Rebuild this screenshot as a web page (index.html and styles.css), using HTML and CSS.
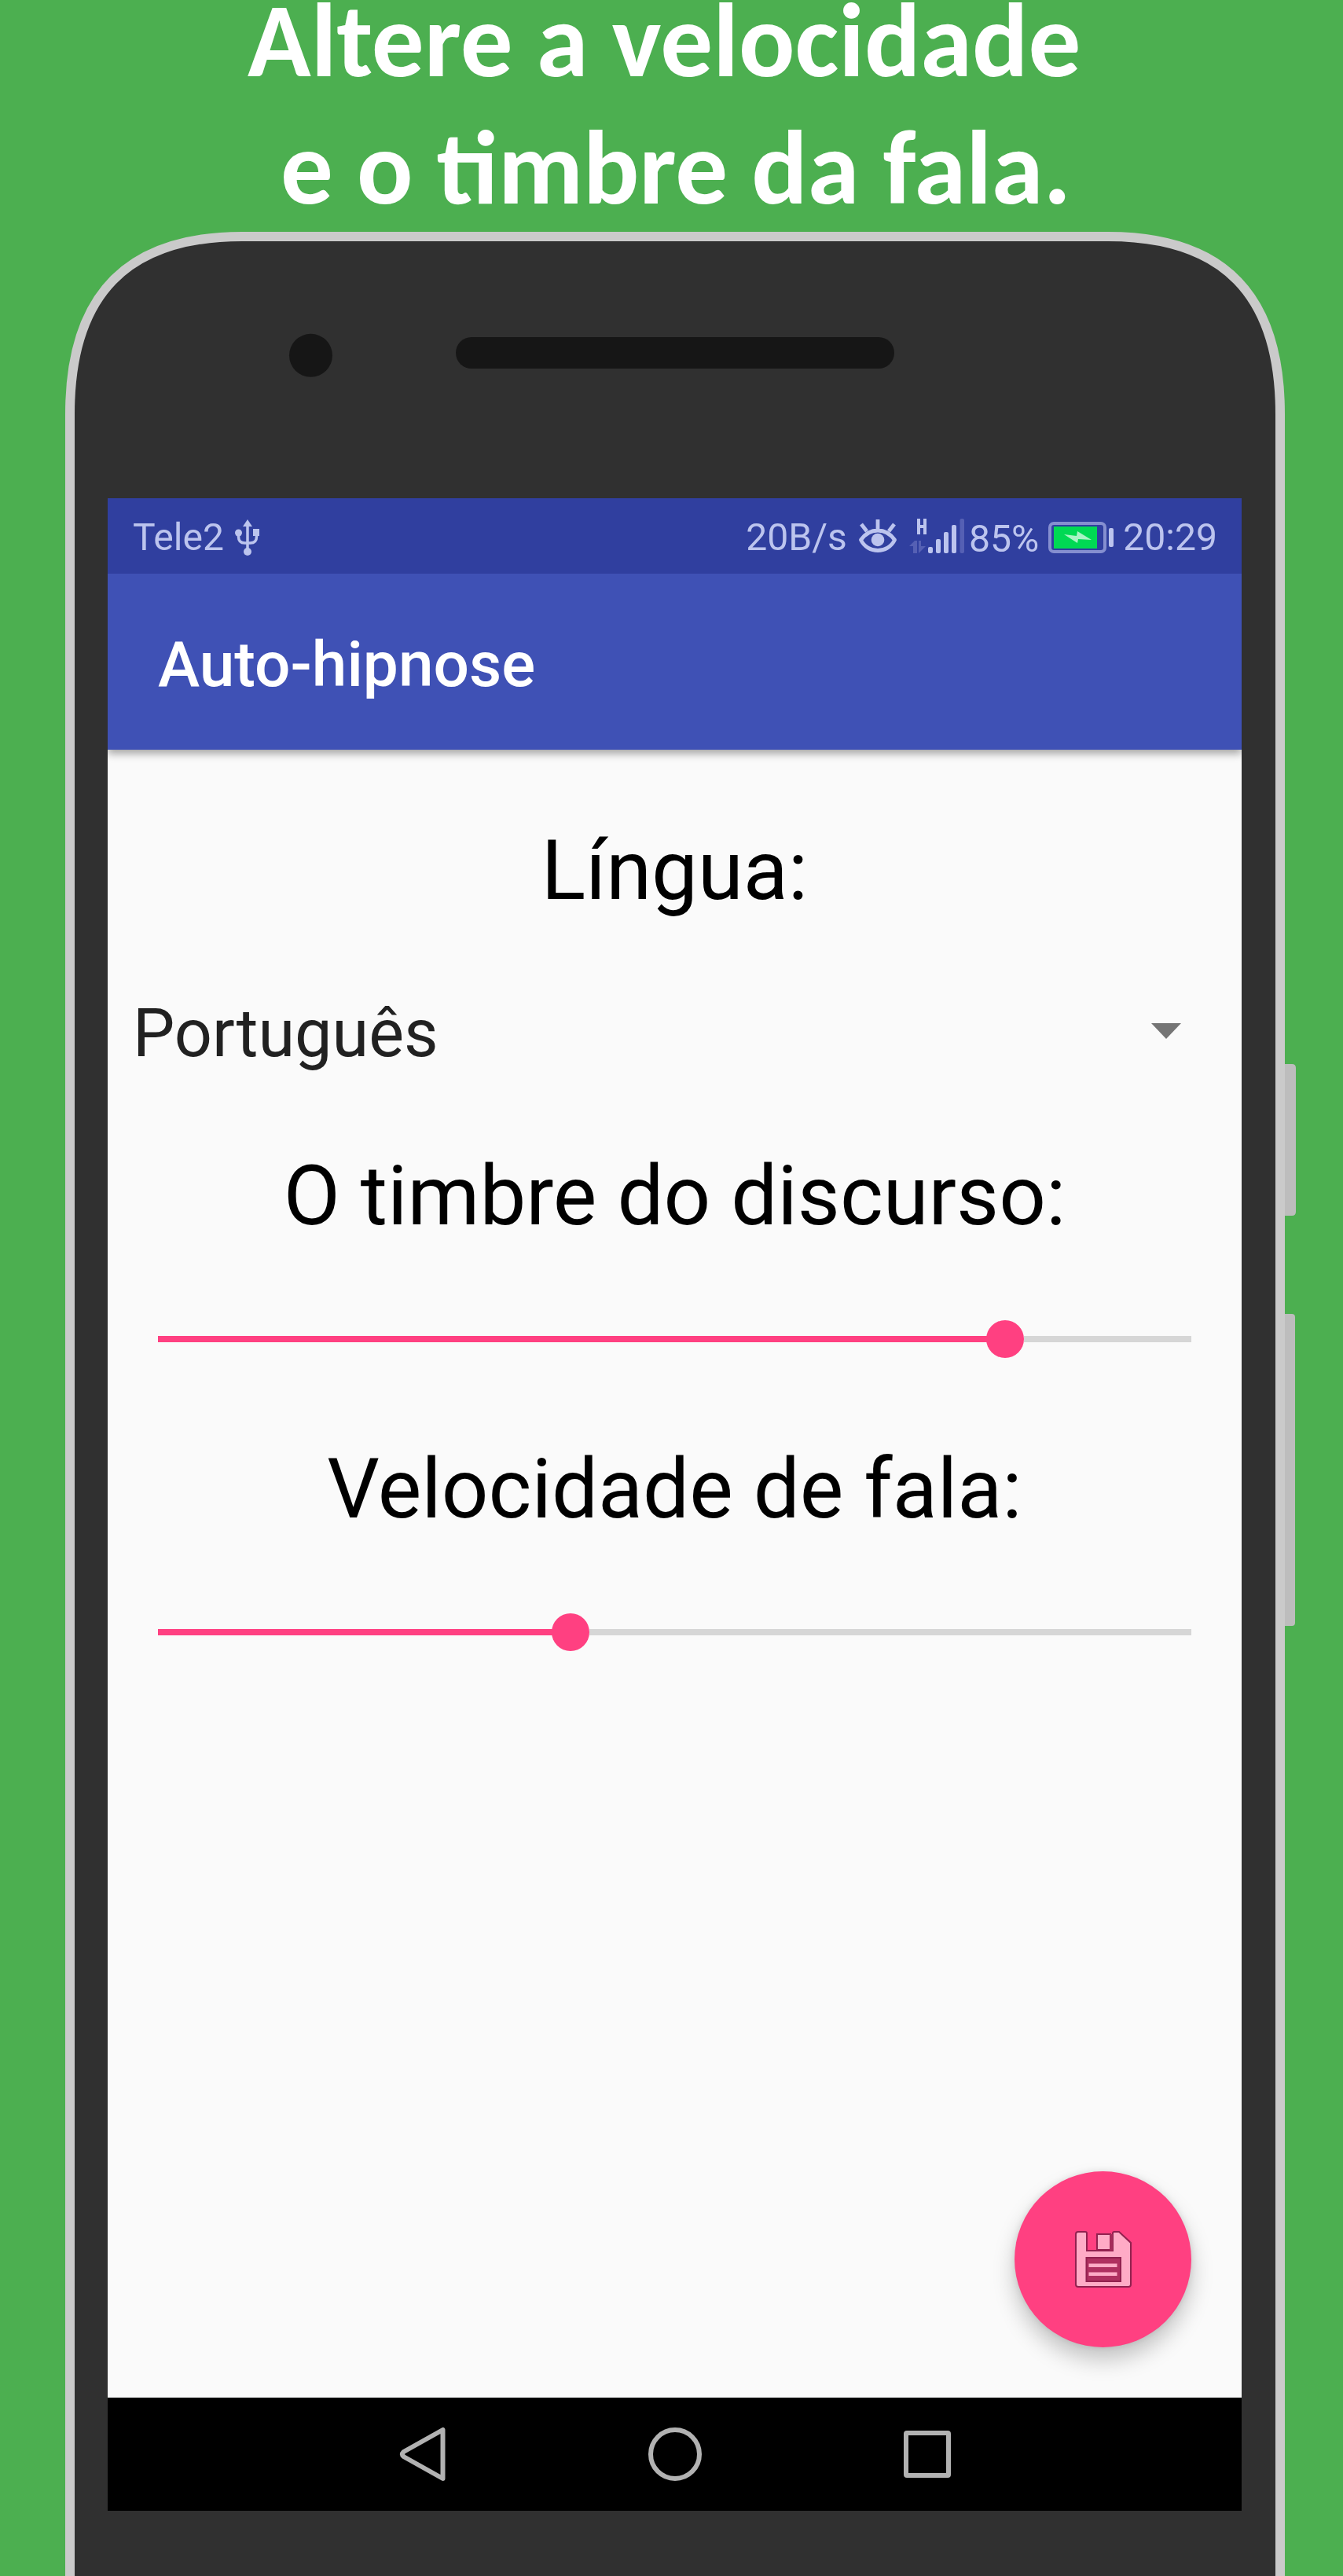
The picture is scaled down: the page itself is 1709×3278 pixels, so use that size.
FILE: index.html
```html
<!DOCTYPE html>
<html lang="pt">
<head>
<meta charset="utf-8">
<title>Auto-hipnose</title>
<link rel="stylesheet" href="styles.css">
</head>
<body>
<main class="promo">
  <h1 class="headline">
    <span class="headline-line line-one">Altere a velocidade</span>
    <span class="headline-line line-two">e o timbre da fala.</span>
  </h1>
  <section class="phone">
    <svg class="phone-frame" viewBox="0 0 1566 2983" aria-hidden="true">
      <path fill="#bdbdbd" d="M1546 1059h15q5 0 5 5v183q0 5-5 5h-15zM1546 1377h15q4 0 4 4v389q0 4-4 4h-15z"/>
      <path fill="#303030" stroke="#cacaca" stroke-width="12" d="M6 3100V232C6 79 79 6 225 6H1327C1473 6 1546 79 1546 232V3100"/>
      <circle cx="312.5" cy="157.3" r="27.5" fill="#161616"/>
      <rect x="497" y="134" width="558" height="40" rx="20" fill="#161616"/>
    </svg>
    <div class="screen">
      <div class="status-bar">
        <span class="carrier">Tele2</span>
        <svg class="usb" viewBox="0 0 32 46" aria-hidden="true"><g fill="#bcc4ee"><path d="M16 0l6 9H10z"/><circle cx="16" cy="41" r="5"/><circle cx="4.500" cy="17" r="4.500"/><path d="M23 12h8v9h-8z"/></g><path d="M16 6v33M4.500 18v4q0 8 8 8h7q8 0 8-8v-4" fill="none" stroke="#bcc4ee" stroke-width="3.500"/></svg>
        <span class="rate">20B/s</span>
        <svg class="eye" viewBox="0 0 48 44" aria-hidden="true"><path d="M2.500 27C14 11 34 11 45.500 27C37 45 11 45 2.500 27zM24 15V1M10 16L3 7M38 16l7-9" fill="none" stroke="#bcc4ee" stroke-width="4.800" stroke-linejoin="round"/><circle cx="24" cy="27" r="8.300" fill="#bcc4ee"/></svg>
        <svg class="signal" viewBox="0 0 70 44" aria-hidden="true"><g fill="#bcc4ee"><path d="M10 0h4v8h4V0h4v20h-4v-8h-4v8h-4z"/><rect x="24" y="36" width="6" height="8" rx="2"/><rect x="34" y="26" width="6" height="18" rx="2"/><rect x="44" y="17" width="6" height="27" rx="2"/><rect x="54" y="8" width="6" height="36" rx="2"/></g><rect x="64.500" y="0" width="5.500" height="44" rx="2" fill="#5560b4"/><path fill="#5560b4" d="M0 35l7-7h3v16H5V35zM12 28h3v7h6l-9 9z"/></svg>
        <span class="percent">85%</span>
        <svg class="battery" viewBox="0 0 84 40" aria-hidden="true"><rect x="2" y="2" width="70" height="36" rx="5" fill="none" stroke="#858fd0" stroke-width="4"/><path fill="#00d954" d="M7 6h55v28H7z"/><path fill="#a9f4c5" d="M20 16l16 2 1-6 18 11-17-1-1 5z"/><rect x="77" y="8" width="6" height="24" rx="2" fill="#bcc4ee"/></svg>
        <span class="clock">20:29</span>
      </div>
      <header class="app-bar">Auto-hipnose</header>
      <div class="settings">
        <h2 class="label label-language">Língua:</h2>
        <div class="spinner"><span>Português</span><svg class="caret" viewBox="0 0 38 20" aria-hidden="true"><path fill="#757575" d="M0 0h38L19 20z"/></svg></div>
        <h2 class="label label-pitch">O timbre do discurso:</h2>
        <div class="slider"><div class="fill" style="width: 1078px"></div><div class="thumb"></div><div class="rest"></div></div>
        <h2 class="label label-speed">Velocidade de fala:</h2>
        <div class="slider"><div class="fill" style="width: 525px"></div><div class="thumb"></div><div class="rest"></div></div>
        <button class="fab" aria-label="Salvar">
          <svg class="floppy" viewBox="0 0 72 74" aria-hidden="true"><g stroke="#92214f" stroke-width="2"><path fill="#ffabc6" d="M4 2h9q2 0 2 2v22h33V4q0-2 2-2h6l15 14v53q0 3-3 3H4q-3 0-3-3V5q0-3 3-3z"/><path fill="#b03060" d="M14.500 35h43.500v30H14.500z"/><path fill="#ffabc6" d="M28 5h17v20H28z"/></g><path fill="#a52b5a" d="M44 5h4v21h-4z"/><path fill="#ffabc6" d="M17.500 42.500h36v4.500h-36zM17.500 53.500h36v4.500h-36z"/></svg>
        </button>
      </div>
      <nav class="nav-bar">
        <svg class="nav-icon" viewBox="0 0 68 68" aria-hidden="true"><path d="M59.500 3v62L9.500 37q-3-3 0-6z"/></svg>
        <svg class="nav-icon" viewBox="0 0 68 68" aria-hidden="true"><circle cx="34" cy="34" r="31"/></svg>
        <svg class="nav-icon" viewBox="0 0 68 68" aria-hidden="true"><rect x="7" y="7" width="54" height="54" rx="1"/></svg>
      </nav>
    </div>
  </section>
</main>
</body>
</html>
```
FILE: styles.css
```css
* { box-sizing: border-box; }
body { margin: 0; background: #4caf50; font-family: Roboto, "Liberation Sans", sans-serif; }
.promo { width: 1709px; height: 3278px; overflow: hidden; display: flex; flex-direction: column; }
.headline { flex: none; height: 295px; margin: 0; color: #fff; font: 700 133.1px/163px Carlito, Lato, sans-serif; white-space: pre; display: flex; flex-direction: column; }
.headline-line { display: block; height: 163px; width: max-content; }
.line-one { margin-left: 315px; height: 134px; line-height: 103px; }
.line-two { margin-left: 357px; }
.phone { flex: none; display: grid; width: 1566px; height: 2983px; margin-left: 83px; }
.phone-frame { grid-area: 1 / 1; width: 1566px; height: 2983px; }
.screen { grid-area: 1 / 1; width: 1443px; height: 2561px; margin: 339px 0 0 54px; display: flex; flex-direction: column; background: #fafafa; z-index: 1; }
.status-bar { height: 96px; flex: none; background: #303f9f; color: #bcc4ee; display: flex; align-items: center; padding: 3px 31px 0 32px; font-size: 48.1px; line-height: 56px; white-space: nowrap; }
.usb { width: 32px; height: 46px; margin-left: 14px; flex: none; }
.rate { margin-left: auto; }
.eye { width: 48px; height: 44px; margin: 0 0 3px 15px; flex: none; }
.signal { width: 70px; height: 44px; margin: 0 0 3px 16px; flex: none; }
.percent { margin-left: 6px; padding-top: 5px; }
.battery { width: 84px; height: 40px; margin-left: 12px; flex: none; }
.clock { margin-left: 11px; }
.app-bar { height: 224px; flex: none; background: #3f51b5; color: #fff; font-size: 80.2px; font-weight: 500; line-height: 94px; padding: 69px 0 0 64px; box-shadow: 0 5px 10px rgba(0,0,0,.35); clip-path: inset(0 0 -30px 0); }
.settings { flex: 1; display: flex; flex-direction: column; min-height: 0; }
.label { margin: 0; font-size: 104.8px; line-height: 122px; font-weight: 400; color: #000; text-align: center; flex: none; }
.label-language { margin-top: 94px; }
.spinner { flex: none; height: 100px; margin: 95px 77px 0 32px; display: flex; align-items: center; justify-content: space-between; color: #212121; font-size: 84.6px; }
.caret { width: 38px; height: 20px; margin-bottom: 6px; }
.label-pitch { margin-top: 97px; }
.slider { flex: none; display: flex; align-items: center; height: 48px; margin: 96px 64px 0; }
.label-speed { margin-top: 107px; }
.fill { flex: none; margin-right: -24px; height: 8px; background: #ff4081; }
.thumb { flex: none; width: 48px; height: 48px; border-radius: 50%; background: #ff4081; z-index: 1; }
.rest { flex: 1; height: 8px; background: #d6d6d6; }
.fab { flex: none; width: 225px; height: 224px; margin: auto 64px 64px auto; padding: 0; border: 0; border-radius: 50%; background: #ff4081; box-shadow: 0 16px 28px rgba(0,0,0,.22), 0 0 8px rgba(0,0,0,.1); display: grid; place-items: center; }
.floppy { width: 72px; height: 74px; }
.nav-bar { flex: none; height: 144px; background: #000; display: flex; align-items: center; justify-content: center; gap: 253px; }
.nav-icon { width: 68px; height: 68px; fill: none; stroke: #b2b2b2; stroke-width: 6; stroke-linejoin: round; }
```
